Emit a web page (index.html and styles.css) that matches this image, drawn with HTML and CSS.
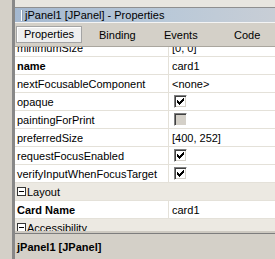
FILE: index.html
```html
<!DOCTYPE html>
<html lang="en">
<head>
  <meta charset="UTF-8">
  <title>jPanel1 [JPanel] - Properties</title>
  <link rel="stylesheet" href="styles.css">
</head>
<body>
  <div class="window">
    <div class="frame-left"></div>
    <div class="main">
      <div class="topstrip"></div>
      <div class="titlebar"><span class="grip"></span>jPanel1 [JPanel] - Properties</div>
      <div class="tabs">
        <div class="tab active">Properties</div>
        <div class="tab">Binding</div>
        <div class="tab">Events</div>
        <div class="tab">Code</div>
      </div>
      <div class="sheet">
        <div class="rows">
          <div class="row"><div class="name">minimumSize</div><div class="value">[0, 0]</div></div>
          <div class="row"><div class="name bold">name</div><div class="value">card1</div></div>
          <div class="row"><div class="name">nextFocusableComponent</div><div class="value">&lt;none&gt;</div></div>
          <div class="row"><div class="name">opaque</div><div class="value"><span class="check"><svg width="7" height="7" viewBox="0 0 7 7"><path d="M0 2h1v3H0zM1 3h1v3H1zM2 4h1v3H2zM3 3h1v3H3zM4 2h1v3H4zM5 1h1v3H5zM6 0h1v3H6z" fill="#000"/></svg></span></div></div>
          <div class="row"><div class="name">paintingForPrint</div><div class="value"><span class="check off"></span></div></div>
          <div class="row"><div class="name">preferredSize</div><div class="value">[400, 252]</div></div>
          <div class="row"><div class="name">requestFocusEnabled</div><div class="value"><span class="check"><svg width="7" height="7" viewBox="0 0 7 7"><path d="M0 2h1v3H0zM1 3h1v3H1zM2 4h1v3H2zM3 3h1v3H3zM4 2h1v3H4zM5 1h1v3H5zM6 0h1v3H6z" fill="#000"/></svg></span></div></div>
          <div class="row"><div class="name">verifyInputWhenFocusTarget</div><div class="value"><span class="check"><svg width="7" height="7" viewBox="0 0 7 7"><path d="M0 2h1v3H0zM1 3h1v3H1zM2 4h1v3H2zM3 3h1v3H3zM4 2h1v3H4zM5 1h1v3H5zM6 0h1v3H6z" fill="#000"/></svg></span></div></div>
          <div class="row category"><span class="minus"></span>Layout</div>
          <div class="row"><div class="name bold">Card Name</div><div class="value">card1</div></div>
          <div class="row category"><span class="minus"></span>Accessibility</div>
        </div>
      </div>
      <div class="status">jPanel1 [JPanel]</div>
    </div>
  </div>
</body>
</html>
```

FILE: styles.css
```css
html, body { margin: 0; padding: 0; }
body { width: 275px; height: 259px; overflow: hidden; background: #d4d0c8; color: #000; font-family: "Liberation Sans", Arial, sans-serif; font-size: 11px; }

.window { display: flex; height: 259px; }
.frame-left { width: 12px; background: #d4d0c8; border-right: 3px solid #888888; flex: none; }
.main { flex: 1; display: flex; flex-direction: column; min-width: 0; }

.topstrip { height: 7px; background: #e8e6e0; border-bottom: 1px solid #8f8f8f; }
.titlebar { height: 14px; line-height: 14px; padding-left: 6px; white-space: nowrap; border-bottom: 1px solid #f4f4f4; background: linear-gradient(90deg, #a4b8d0 0%, #b8c8d8 55%, #c8ced6 100%); display: flex; align-items: center; }
.grip { width: 1px; height: 11px; background: #fff; border-right: 1px solid #8ea0b6; margin-right: 2px; }

.tabs { height: 23px; background: #d4d0c8; border-bottom: 1px solid #aaa69e; display: grid; grid-template-columns: 67px 65px 70px 1fr; align-items: center; }
.tab { padding-left: 17px; white-space: nowrap; }
.tab.active { padding: 0; margin: 3px 0 0 1px; align-self: start; height: 17px; line-height: 15px; box-sizing: border-box; text-align: center; background: #efefef; border: 1px solid #a4a4a4; box-shadow: inset 1px 1px 0 #fff; }

.sheet { height: 184px; overflow: hidden; background: #fff; border-bottom: 2px solid #cdc9c1; }
.rows { margin-top: -8px; }
.row { height: 18px; box-sizing: border-box; border-bottom: 1px solid #e4e1d9; display: grid; grid-template-columns: 154px 1fr; line-height: 18px; }
.name { padding-left: 2px; border-right: 1px solid #e4e1d9; white-space: nowrap; overflow: hidden; }
.value { padding-left: 3px; display: flex; align-items: center; white-space: nowrap; }
.bold { font-weight: bold; }

.check { width: 13px; height: 13px; margin-left: 2px; box-sizing: border-box; padding: 2px; border: 1px solid; border-color: #808080 #fff #fff #808080; box-shadow: inset 1px 1px 0 #404040, inset -1px -1px 0 #d4d0c8; background: #fff; display: flex; align-items: center; justify-content: center; }
.check svg { display: block; }
.check.off { background: #d4d0c8; }

.category { display: flex; align-items: center; background: #ece9e2; padding-left: 2px; }
.minus { width: 9px; height: 9px; box-sizing: border-box; border: 1px solid #333; background: #fff; margin-right: 1px; position: relative; }
.minus::after { content: ""; position: absolute; left: 1px; right: 1px; top: 3px; height: 1px; background: #000; }

.status { flex: 1; border-top: 1px solid #7d7d7d; padding: 5px 0 0 2px; line-height: 16px; font-weight: bold; background: #d4d0c8; }
```
